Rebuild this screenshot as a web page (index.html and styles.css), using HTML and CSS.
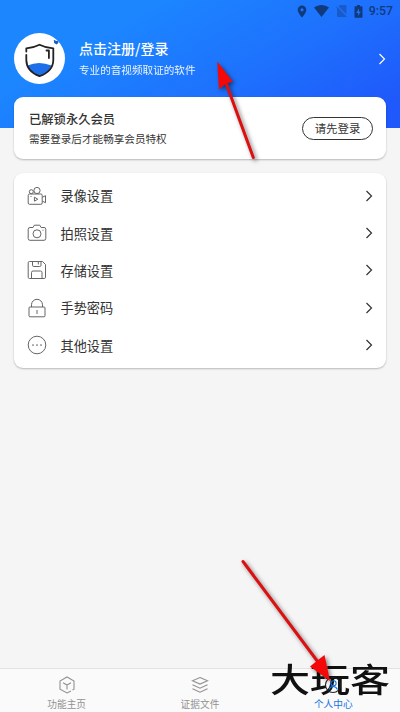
FILE: index.html
```
<!DOCTYPE html>
<html lang="zh-CN">
<head>
	<meta charset="UTF-8">
	<title>个人中心</title>
	<link rel="stylesheet" href="styles.css">
</head>
<body>
<div id="wrap">
	<div class="header">
		<div class="status">
			<svg width="10" height="13" viewBox="0 0 10 13"><path d="M5 .5a4.3 4.3 0 0 0-4.3 4.3C.7 8 5 12.6 5 12.6S9.300 8 9.300 4.800A4.300 4.300 0 0 0 5 .5zm0 5.900a1.600 1.600 0 1 1 0-3.200 1.600 1.600 0 0 1 0 3.200z"/></svg>
			<svg class="wifi" width="15" height="12" viewBox="0 0 15 12"><path d="M7.500 12L0 2.600C4.500-.8 10.500-.8 15 2.600z"/></svg>
			<svg class="sim" width="11" height="12" viewBox="0 0 11 12"><path d="M4 0h5.500q1 0 1 1v8.400L2.600 1.500zM.9 1.600L.2 2.300 1 3.100V11q0 1 1 1h7.600l.5.400.7-.7z"/></svg>
			<svg class="battery" width="9" height="13" viewBox="0 0 9 13"><path fill-rule="evenodd" d="M3 0h3v1.300h1.700q.8 0 .8.800V12q0 .8-.8.800H1.300q-.8 0-.8-.8V2.100q0-.8.800-.8H3zM5 3.400L2.200 8h1.900v3L6.800 6.500H5z"/></svg>
			<span class="time">9:57</span>
		</div>
		<div class="user">
			<div class="avatar">
				<svg width="51" height="51" viewBox="0 0 51 51">
					<path fill="#1c6fe8" d="M13.500 32.500Q25 27.500 37.500 32.500Q34.500 40 25.500 43Q16.500 40 13.500 32.500z"/>
					<path class="shield" d="M12.300 18.500V15.300Q19 15 25.500 11.700Q32 15 39.300 15.300V27Q39 38.500 25.500 43.200Q12.500 38.500 12.300 27V22"/>
					<path class="shield" d="M32.500 17.500H34.900V25"/>
					<path fill="#1a5cc4" d="M39.800 6.800l2.500 1.300 1.600-.6.500 2.300-1.700 1.700-2.600-1.400z"/>
				</svg>
			</div>
			<div class="info">
				<h2>点击注册/登录</h2>
				<p>专业的音视频取证的软件</p>
			</div>
			<svg class="arrow" width="8" height="12" viewBox="0 0 8 12"><path d="M1.500 1l5 5-5 5"/></svg>
		</div>
	</div>

	<div class="card vip">
		<div>
			<h3>已解锁永久会员</h3>
			<p>需要登录后才能畅享会员特权</p>
		</div>
		<a class="btn">请先登录</a>
	</div>

	<ul class="card menu">
		<li>
			<svg class="icon" viewBox="0 0 20 20"><rect x="1.200" y="8" width="14" height="10.300" rx="1.300"/><circle cx="4.300" cy="5.700" r="2"/><circle cx="10" cy="4.500" r="3.100"/><path d="M15.500 11.200l3-1.500v7l-3-1.500M7.400 11.200v4l3.400-2zM3.500 10.500h1"/></svg>
			<span>录像设置</span>
			<svg class="arrow" width="8" height="12" viewBox="0 0 8 12"><path d="M1.500 1l5 5-5 5"/></svg>
		</li>
		<li>
			<svg class="icon" viewBox="0 0 20 20"><path d="M3 4.500h3l1.300-2.300h5.500L14.100 4.500H17q1.800 0 1.800 1.800v9.200q0 1.800-1.800 1.800H3q-1.800 0-1.800-1.800V6.300Q1.200 4.500 3 4.500z"/><circle cx="10" cy="10.800" r="4"/><path d="M15.500 7.200h1"/></svg>
			<span>拍照设置</span>
			<svg class="arrow" width="8" height="12" viewBox="0 0 8 12"><path d="M1.500 1l5 5-5 5"/></svg>
		</li>
		<li>
			<svg class="icon" viewBox="0 0 20 20"><path d="M2.500 1.500h13l3 3v12.700q0 1.300-1.300 1.300H2.500q-1.300 0-1.300-1.300V2.800q0-1.300 1.300-1.300zM5.500 1.500v3.700q0 1.300 1.300 1.300h5.900q1.300 0 1.300-1.300V1.500M11.300 2v2.500M4.500 18.500v-6q0-1.500 1.500-1.500h7.500q1.500 0 1.500 1.500v6"/></svg>
			<span>存储设置</span>
			<svg class="arrow" width="8" height="12" viewBox="0 0 8 12"><path d="M1.500 1l5 5-5 5"/></svg>
		</li>
		<li>
			<svg class="icon" viewBox="0 0 20 20"><rect x="2" y="9" width="16" height="9.800" rx="1"/><path d="M4.500 9V6.800a5.500 5.500 0 0 1 11 0V9M10 12v4"/></svg>
			<span>手势密码</span>
			<svg class="arrow" width="8" height="12" viewBox="0 0 8 12"><path d="M1.500 1l5 5-5 5"/></svg>
		</li>
		<li>
			<svg class="icon" viewBox="0 0 20 20"><circle cx="10" cy="10" r="8.800"/><path class="dots" d="M6 10h.01M10 10h.01M14 10h.01"/></svg>
			<span>其他设置</span>
			<svg class="arrow" width="8" height="12" viewBox="0 0 8 12"><path d="M1.500 1l5 5-5 5"/></svg>
		</li>
	</ul>

	<ul class="tabbar">
		<li>
			<svg viewBox="0 0 18 18"><path d="M13 15L9 17l-7-3.800V5L9 1l7 4v8.200l-1.500.8M5 6.700L9 9l4-2.300M9 9v4.500"/></svg>
			<span>功能主页</span>
		</li>
		<li>
			<svg viewBox="0 0 18 18"><path d="M9 1.500l7.500 3.300L9 8.100 1.500 4.800zM1.500 8.800L9 12.200l7.500-3.400M1.500 12.800L9 16.200l7.500-3.400"/></svg>
			<span>证据文件</span>
		</li>
		<li class="active">
			<svg viewBox="0 0 18 18"><circle class="ring" cx="9" cy="9" r="7.500"/><circle cx="9.500" cy="7.300" r="2.600"/><path d="M5 13.500Q6 10.500 9 10.500T13.500 13.500"/></svg>
			<span>个人中心</span>
		</li>
	</ul>

	<div class="mark">大玩客</div>

	<!-- 指示箭头 -->
	<svg class="pointer" width="400" height="712" viewBox="0 0 400 712">
		<path class="line" d="M226 83L253.300 157.500M243 561.500L318 662"/>
		<path d="M217.300 61.500L232.800 81.800 226 83.500 219 89.500z"/>
		<path d="M330 681L324.500 655 318 660 310 666.500z"/>
	</svg>
</div>
</body>
</html>
```
FILE: styles.css
```
*{
	margin:0; padding:0; list-style:none;
	box-sizing:border-box;
}
body{
	font-family:"Noto Sans CJK SC",sans-serif;
	color:#333; background:#f5f5f5;
}
svg{
	display:block; flex:none;
}
#wrap{
	width:400px; height:712px;
	display:flex; flex-direction:column;
	position:relative; overflow:hidden;
}

.header{
	height:128px; flex:none;
	background:linear-gradient(150deg,#1c86ff 25%,#1e70fd 62%,#1f58fb 92%);
}
.status{
	height:22px; padding:0 7px 0 0;
	display:flex; align-items:center; justify-content:flex-end;
	fill:#103a7c;
}
.wifi{
	margin-left:7px;
}
.sim{
	margin-left:7px; opacity:.4;
}
.battery{
	margin-left:7px;
}
.time{
	margin-left:6px;
	font:500 12.3px/22px Roboto,sans-serif;
	color:#103a7c;
}
.user{
	height:51px; margin-top:11px;
	padding:0 14px 0 14px;
	display:flex; align-items:center;
	color:#fff;
}
.avatar{
	width:51px; height:51px;
	border-radius:50%; background:#fff;
}
.shield{
	fill:none; stroke:#222; stroke-width:1.8;
	stroke-linejoin:round; stroke-linecap:round;
}
.info{
	flex:1; padding-left:14px;
}
.info h2{
	font-size:14px; font-weight:500; line-height:21px;
}
.info p{
	font-size:10.6px; line-height:21px;
	opacity:.9;
}
.arrow{
	fill:none; stroke:#333; stroke-width:1.2;
}
.user .arrow{
	stroke:#fff;
}

.card{
	margin:0 14px; flex:none;
	background:#fff; border-radius:9px;
	box-shadow:0 1px 2px rgba(0,0,0,.25);
}
.vip{
	height:62px; margin-top:-31px;
	padding:1px 13px 0 15px;
	display:flex; align-items:center; justify-content:space-between;
}
.vip h3{
	font-size:12.3px; font-weight:500; line-height:20px;
}
.vip p{
	font-size:10.6px; line-height:20px;
}
.btn{
	width:71px; height:23px;
	border:1px solid #333; border-radius:12px;
	font-size:11.4px; line-height:21px; text-align:center;
}
.menu{
	height:195px; margin-top:14px;
	padding:4px 13px;
}
.menu li{
	height:37.4px;
	display:flex; align-items:center;
}
.menu span{
	flex:1; padding-left:13.5px;
	font-size:13.2px; line-height:19px;
}
.icon{
	width:20px; height:20px;
	fill:none; stroke:#666; stroke-width:1;
}
.dots{
	stroke-width:1.7; stroke-linecap:round;
}

.tabbar{
	height:44px; margin-top:auto;
	display:flex;
	background:#fafafa; border-top:1px solid #e2e2e2;
}
.tabbar li{
	flex:1; padding-top:7px;
	display:flex; flex-direction:column; align-items:center;
	font-size:9.7px; line-height:14px; color:#929292;
}
.tabbar svg{
	width:18px; height:18px; margin-bottom:3px;
	fill:none; stroke:#929292; stroke-width:1.1;
}
.tabbar .active{
	color:#1874e4;
}
.tabbar .active svg{
	stroke:#1874e4; position:relative; z-index:2;
}
.tabbar .active .ring{
	stroke:#222;
}

/* 水印 */
.mark{
	position:absolute; left:270px; top:658px;
	font-size:40px; font-weight:500; line-height:40px;
	color:#111; white-space:nowrap;
	transform:scaleY(.82);
}
.pointer{
	position:absolute; left:0; top:0; z-index:3;
	fill:#f40808; pointer-events:none;
	filter:drop-shadow(2px 2px 2px rgba(0,0,0,.5));
}
.line{
	stroke:#dc1010; stroke-width:3; stroke-linecap:round;
}
```
